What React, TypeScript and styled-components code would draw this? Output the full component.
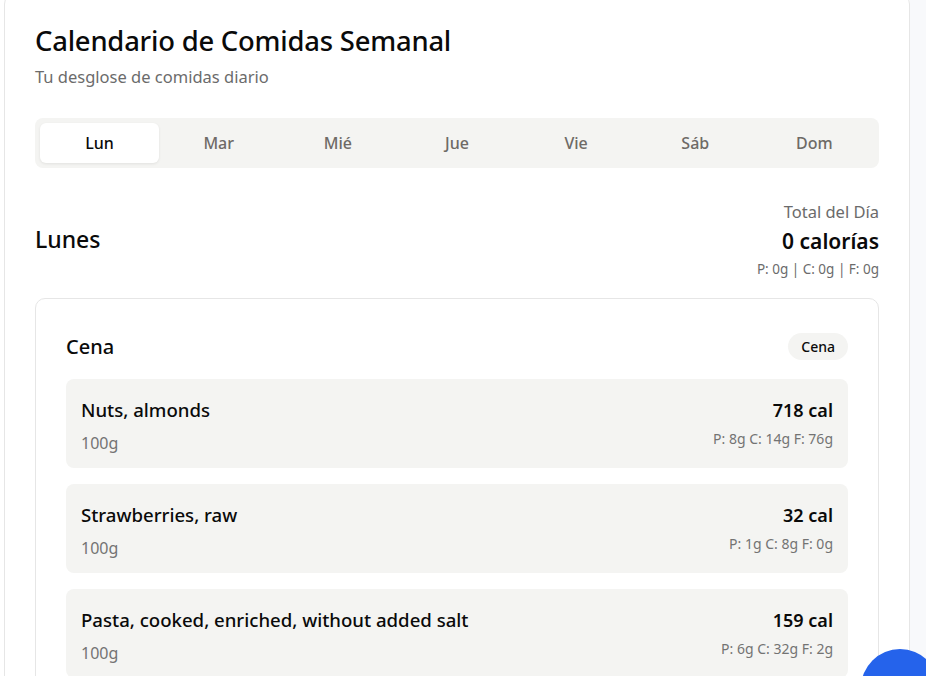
import React from "react";
import styled, { createGlobalStyle } from "styled-components";

const Global = createGlobalStyle`
  html, body { margin: 0; padding: 0; background: #ffffff; }
  body { font-family: "Noto Sans", "Open Sans", sans-serif; color: #0a0a0a; overflow: hidden; }
  * { box-sizing: border-box; }
`;

const Page = styled.div`
  display: flex;
  align-items: flex-start;
  height: 676px;
  overflow: hidden;
  position: relative;
`;

const Card = styled.main`
  width: 906px;
  margin-left: 4px;
  margin-top: -8px;
  border: 1px solid #e6e6e6;
  border-radius: 12px;
  background: #fff;
  padding: 30px 30px 40px 30px;
  flex-shrink: 0;
`;

const Aside = styled.aside`
  flex: 1;
  align-self: stretch;
  background: #f8f9fb;
`;

const Title = styled.h1`
  margin: 0;
  font-size: 27.4px;
  font-weight: 500;
  line-height: 36px;
  letter-spacing: -0.2px;
`;

const Subtitle = styled.p`
  margin: 7px 0 0;
  font-size: 16.5px;
  line-height: 22px;
  color: #6b6b6b;
`;

const Tabs = styled.div`
  margin-top: 30px;
  display: grid;
  grid-template-columns: repeat(7, 1fr);
  background: #f4f4f2;
  border-radius: 8px;
  padding: 5px;
  height: 50px;
`;

const Tab = styled.div<{ $active?: boolean }>`
  display: flex;
  align-items: center;
  justify-content: center;
  border-radius: 6px;
  font-size: 16px;
  font-weight: 500;
  color: ${(p) => (p.$active ? "#0a0a0a" : "#6e6a66")};
  background: ${(p) => (p.$active ? "#fff" : "transparent")};
  box-shadow: ${(p) => (p.$active ? "0 1px 3px rgba(0,0,0,0.08)" : "none")};
`;

const DayHeader = styled.div`
  margin-top: 33px;
  display: flex;
  justify-content: space-between;
  align-items: center;
`;

const DayName = styled.h2`
  margin: 0;
  font-size: 23px;
  font-weight: 500;
  position: relative;
  top: -1px;
`;

const Totals = styled.div`
  display: flex;
  flex-direction: column;
  align-items: flex-end;
`;

const TotalLabel = styled.div`
  font-size: 16.5px;
  line-height: 22px;
  color: #6b6b6b;
`;

const TotalCal = styled.div`
  margin-top: 2px;
  font-size: 21px;
  font-weight: 600;
  line-height: 32px;
`;

const TotalMacros = styled.div`
  margin-top: 2px;
  font-size: 13.5px;
  line-height: 20px;
  color: #6b6b6b;
`;

const MealCard = styled.section`
  margin-top: 19px;
  border: 1px solid #e6e6e6;
  border-radius: 10px;
  padding: 34px 30px 30px;
`;

const MealHead = styled.div`
  display: flex;
  justify-content: space-between;
  align-items: center;
  margin-bottom: 19px;
`;

const MealTitle = styled.h3`
  margin: 0;
  font-size: 20px;
  font-weight: 500;
`;

const Badge = styled.span`
  background: #f4f4f2;
  border-radius: 999px;
  padding: 4px 13px;
  font-size: 14px;
  font-weight: 500;
  line-height: 19px;
`;

const List = styled.div`
  display: flex;
  flex-direction: column;
  gap: 16px;
`;

const Item = styled.div`
  background: #f4f4f2;
  border-radius: 8px;
  height: 89px;
  padding: 18px 15px 0;
  display: flex;
  justify-content: space-between;
`;

const Col = styled.div<{ $right?: boolean }>`
  display: flex;
  flex-direction: column;
  align-items: ${(p) => (p.$right ? "flex-end" : "flex-start")};
`;

const Name = styled.div`
  font-size: 18.6px;
  font-weight: 500;
  line-height: 26px;
`;

const Qty = styled.div`
  margin-top: 9px;
  font-size: 16px;
  line-height: 22px;
  color: #737373;
`;

const Cal = styled.div`
  font-size: 18px;
  font-weight: 600;
  line-height: 26px;
`;

const Macros = styled.div`
  margin-top: 6px;
  font-size: 14px;
  line-height: 20px;
  color: #737373;
`;

const Fab = styled.div`
  position: absolute;
  left: 861px;
  top: 649px;
  width: 78px;
  height: 78px;
  border-radius: 50%;
  background: #2563eb;
`;

const days = ["Lun", "Mar", "Mié", "Jue", "Vie", "Sáb", "Dom"];

const items = [
  { name: "Nuts, almonds", qty: "100g", cal: "718 cal", macros: "P: 8g C: 14g F: 76g" },
  { name: "Strawberries, raw", qty: "100g", cal: "32 cal", macros: "P: 1g C: 8g F: 0g" },
  { name: "Pasta, cooked, enriched, without added salt", qty: "100g", cal: "159 cal", macros: "P: 6g C: 32g F: 2g" },
];

export default function App() {
  return (
    <Page>
      <Global />
      <Card>
        <Title>Calendario de Comidas Semanal</Title>
        <Subtitle>Tu desglose de comidas diario</Subtitle>
        <Tabs>
          {days.map((d, i) => (
            <Tab key={d} $active={i === 0}>{d}</Tab>
          ))}
        </Tabs>
        <DayHeader>
          <DayName>Lunes</DayName>
          <Totals>
            <TotalLabel>Total del Día</TotalLabel>
            <TotalCal>0 calorías</TotalCal>
            <TotalMacros>P: 0g | C: 0g | F: 0g</TotalMacros>
          </Totals>
        </DayHeader>
        <MealCard>
          <MealHead>
            <MealTitle>Cena</MealTitle>
            <Badge>Cena</Badge>
          </MealHead>
          <List>
            {items.map((it) => (
              <Item key={it.name}>
                <Col>
                  <Name>{it.name}</Name>
                  <Qty>{it.qty}</Qty>
                </Col>
                <Col $right>
                  <Cal>{it.cal}</Cal>
                  <Macros>{it.macros}</Macros>
                </Col>
              </Item>
            ))}
          </List>
        </MealCard>
      </Card>
      <Aside />
      <Fab />
    </Page>
  );
}
